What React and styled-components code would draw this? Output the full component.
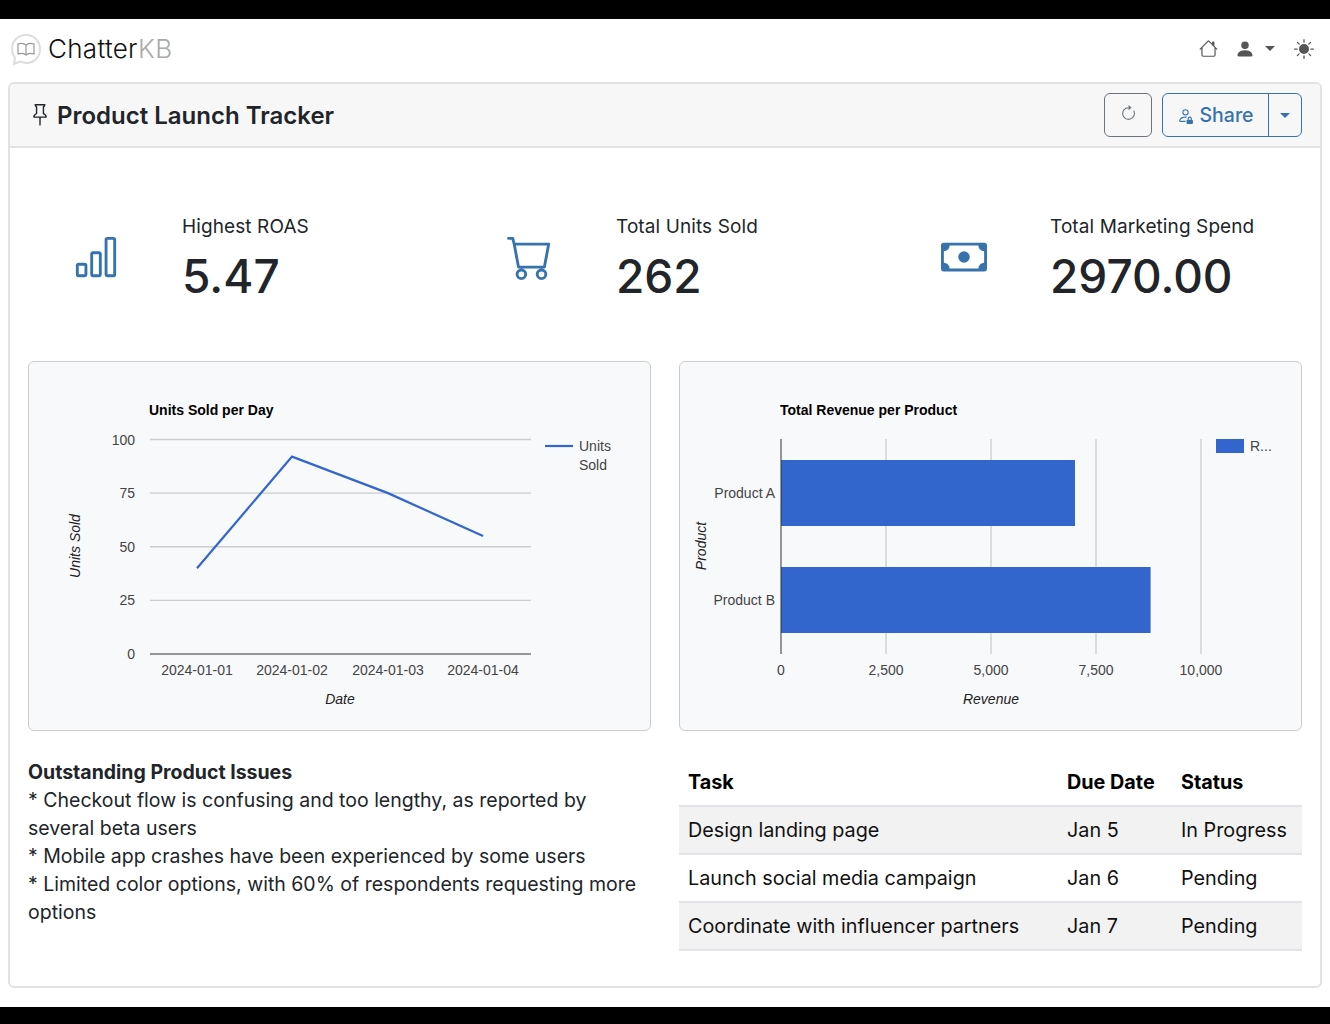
import React from 'react';
import styled, { createGlobalStyle } from 'styled-components';
import {
  BsHouse, BsPersonFill, BsSunFill, BsPin, BsArrowClockwise,
  BsPersonLock, BsBarChart, BsCart, BsCash,
} from 'react-icons/bs';

const GlobalStyle = createGlobalStyle`
  html, body { margin: 0; padding: 0; background: #000; }
  body { font-family: Inter, "Noto Sans", sans-serif; color: #212529; }
`;

const Page = styled.div`
  width: 1330px;
  height: 1024px;
  padding: 19px 0 17px;
  box-sizing: border-box;
`;

const Screen = styled.div`
  background: #fff;
  height: 988px;
  padding: 0 8px;
  box-sizing: border-box;
`;

const Nav = styled.nav`
  height: 63px;
  display: flex;
  align-items: center;
  justify-content: space-between;
  padding: 0 8px 4px 0;
  box-sizing: border-box;
`;

const Brand = styled.div`
  display: flex;
  align-items: center;
  gap: 6px;
  margin-left: 2px;
  font-size: 26px;
  letter-spacing: 0.3px;
  font-weight: 300;
  color: #111;
`;

const BrandLight = styled.span`
  color: #aaa;
`;

const LogoSvg = styled.svg`
  margin-top: 2px;
`;

const NavIcons = styled.div`
  display: flex;
  align-items: center;
  color: #555;
`;

const NavButton = styled.span`
  display: flex;
  align-items: center;
  margin-left: ${(p) => p.$gap || 0}px;
  font-size: ${(p) => p.$size || 20}px;
`;

const Caret = styled.span`
  width: 0;
  height: 0;
  margin-left: ${(p) => p.$gap || 0}px;
  border-left: 5px solid transparent;
  border-right: 5px solid transparent;
  border-top: 5px solid ${(p) => p.$color || '#555'};
`;

const Card = styled.main`
  height: 906px;
  border: 2px solid #e2e2e2;
  border-radius: 6px;
  box-sizing: border-box;
`;

const CardHeader = styled.header`
  height: 64px;
  background: #f7f7f7;
  border-bottom: 2px solid #e2e2e2;
  border-radius: 4px 4px 0 0;
  display: flex;
  align-items: center;
  justify-content: space-between;
  padding: 0 18px 0 19px;
  box-sizing: border-box;
`;

const Title = styled.h1`
  margin: 0;
  display: flex;
  align-items: center;
  gap: 6px;
  font-size: 24px;
  font-weight: 600;
  color: #212529;
`;

const HeaderActions = styled.div`
  display: flex;
  align-items: center;
  gap: 10px;
`;

const RefreshButton = styled.button`
  width: 48px;
  height: 44px;
  background: transparent;
  border: 1px solid #6c757d;
  border-radius: 6px;
  color: #6c757d;
  display: flex;
  align-items: center;
  justify-content: center;
  font-size: 17px;
  padding: 0 0 3px;
`;

const ShareGroup = styled.div`
  display: flex;
  height: 44px;
  border: 1px solid #3673ad;
  border-radius: 6px;
  box-sizing: border-box;
  color: #3673ad;
`;

const ShareMain = styled.div`
  width: 106px;
  display: flex;
  align-items: center;
  justify-content: center;
  gap: 5px;
  font-size: 19.5px;
  font-weight: 500;
  border-right: 1px solid #3673ad;
  box-sizing: border-box;
`;

const ShareCaret = styled.div`
  width: 32px;
  display: flex;
  align-items: center;
  justify-content: center;
`;

const CardBody = styled.section`
  padding: 0 18px;
`;

const Stats = styled.div`
  display: grid;
  grid-template-columns: repeat(3, 434px);
  height: 213px;
  align-items: start;
  padding-top: 65px;
  box-sizing: border-box;
`;

const Stat = styled.div`
  display: grid;
  grid-template-columns: 136px 1fr;
  column-gap: 18px;
`;

const StatIcon = styled.div`
  display: flex;
  align-items: center;
  justify-content: center;
  color: #3673ad;
  font-size: ${(p) => p.$size}px;
  height: 88px;
`;

const StatLabel = styled.div`
  font-size: 19px;
  line-height: 28px;
  letter-spacing: 0.1px;
  color: #212529;
`;

const StatValue = styled.div`
  font-size: 46px;
  line-height: 70px;
  font-weight: 500;
  color: #212529;
`;

const ChartsRow = styled.div`
  display: grid;
  grid-template-columns: 1fr 1fr;
  column-gap: 28px;
`;

const ChartBox = styled.div`
  height: 370px;
  background: #f8f9fa;
  border: 1px solid #ccc;
  border-radius: 6px;
  box-sizing: border-box;
`;

const ChartSvg = styled.svg`
  display: block;
  font-family: "Liberation Sans", Arial, sans-serif;
  font-size: 14px;
  fill: #444;
`;

const ChartTitle = styled.text`
  font-weight: 700;
  font-size: 14px;
  fill: #000;
`;

const AxisTitle = styled.text`
  font-style: italic;
  fill: #222;
`;

const BottomRow = styled.div`
  display: grid;
  grid-template-columns: 1fr 1fr;
  column-gap: 28px;
  margin-top: 27px;
`;

const Notes = styled.div`
  font-size: 19.5px;
  line-height: 28px;
  color: #212529;
`;

const NotesTitle = styled.div`
  font-weight: 700;
`;

const Table = styled.table`
  width: 100%;
  border-collapse: collapse;
  font-size: 19.8px;
  color: #111;
`;

const Th = styled.th`
  text-align: left;
  font-weight: 700;
  height: 48px;
  padding: 0 9px;
  color: #000;
  border-bottom: 2px solid #e2e3e8;
  width: ${(p) => p.$width || 'auto'};
  box-sizing: border-box;
`;

const Row = styled.tr`
  background: ${(p) => (p.$striped ? '#f2f2f2' : '#fff')};
`;

const Td = styled.td`
  height: 46px;
  padding: 0 9px;
  border-bottom: 2px solid #e2e3e8;
`;

const rows = [
  { task: 'Design landing page', due: 'Jan 5', status: 'In Progress' },
  { task: 'Launch social media campaign', due: 'Jan 6', status: 'Pending' },
  { task: 'Coordinate with influencer partners', due: 'Jan 7', status: 'Pending' },
];

const stats = [
  { label: 'Highest ROAS', value: '5.47', icon: <BsBarChart />, size: 46 },
  { label: 'Total Units Sold', value: '262', icon: <BsCart />, size: 46 },
  { label: 'Total Marketing Spend', value: '2970.00', icon: <BsCash />, size: 46 },
];

const unitsData = [
  { x: 168, v: 40, label: '2024-01-01' },
  { x: 263, v: 92, label: '2024-01-02' },
  { x: 359, v: 75, label: '2024-01-03' },
  { x: 454, v: 55, label: '2024-01-04' },
];

const valueToY = (v) => 292 - v * 2.145;

function UnitsChart() {
  return (
    <ChartSvg width="621" height="368" viewBox="0 0 621 368">
      <ChartTitle x="120" y="53">Units Sold per Day</ChartTitle>
      {[100, 75, 50, 25].map((v) => (
        <line key={v} x1="121" x2="502" y1={valueToY(v)} y2={valueToY(v)} stroke="#ccc" strokeWidth="1.3" />
      ))}
      <line x1="121" x2="502" y1="292" y2="292" stroke="#333" strokeWidth="1" />
      {[100, 75, 50, 25, 0].map((v) => (
        <text key={v} x="106" y={valueToY(v) + 5} textAnchor="end">{v}</text>
      ))}
      <polyline
        points={unitsData.map((d) => `${d.x},${valueToY(d.v)}`).join(' ')}
        fill="none"
        stroke="#3366cc"
        strokeWidth="2.2"
      />
      {unitsData.map((d) => (
        <text key={d.label} x={d.x} y="313" textAnchor="middle">{d.label}</text>
      ))}
      <AxisTitle x="311" y="342" textAnchor="middle">Date</AxisTitle>
      <AxisTitle transform="translate(51 184) rotate(-90)" textAnchor="middle">Units Sold</AxisTitle>
      <line x1="516" x2="544" y1="84" y2="84" stroke="#3366cc" strokeWidth="2.2" />
      <text x="550" y="89">Units</text>
      <text x="550" y="108">Sold</text>
    </ChartSvg>
  );
}

const revenueData = [
  { label: 'Product A', value: 7000, y: 98 },
  { label: 'Product B', value: 8800, y: 205 },
];

const revenueToX = (v) => 101 + v * 0.042;

function RevenueChart() {
  return (
    <ChartSvg width="621" height="368" viewBox="0 0 621 368">
      <ChartTitle x="100" y="53">Total Revenue per Product</ChartTitle>
      {[2500, 5000, 7500, 10000].map((v) => (
        <line key={v} x1={revenueToX(v)} x2={revenueToX(v)} y1="77" y2="292" stroke="#ccc" strokeWidth="1.3" />
      ))}
      {revenueData.map((d) => (
        <rect key={d.label} x="101" y={d.y} width={revenueToX(d.value) - 101} height="66" fill="#3366cc" />
      ))}
      <line x1="101" x2="101" y1="77" y2="292" stroke="#333" strokeWidth="1" />
      {revenueData.map((d) => (
        <text key={d.label} x="95" y={d.y + 38} textAnchor="end">{d.label}</text>
      ))}
      {[0, 2500, 5000, 7500, 10000].map((v) => (
        <text key={v} x={revenueToX(v)} y="313" textAnchor="middle">{v.toLocaleString('en-US')}</text>
      ))}
      <AxisTitle x="311" y="342" textAnchor="middle">Revenue</AxisTitle>
      <AxisTitle transform="translate(26 184) rotate(-90)" textAnchor="middle">Product</AxisTitle>
      <rect x="536" y="77" width="28" height="14" fill="#3366cc" />
      <text x="570" y="89">R...</text>
    </ChartSvg>
  );
}

function LogoMark() {
  return (
    <LogoSvg width="32" height="33" viewBox="0 0 32 33" fill="none">
      <path
        d="M16 2C8 2 2 8 2 16c0 3.500 1.200 6.500 3 9l-1 6 6.500-2.600C12 29.300 14 30 16 30c8 0 14-6 14-14S24 2 16 2Z"
        stroke="#ddd"
        strokeWidth="2"
      />
      <path
        d="M8 11c3-1 6-1 8 1 2-2 5-2 8-1v10c-3-1-6-1-8 1-2-2-5-2-8-1V11Zm8 1v10"
        stroke="#999"
        strokeWidth="1.200"
      />
    </LogoSvg>
  );
}

export default function App() {
  return (
    <Page>
      <GlobalStyle />
      <Screen>
        <Nav>
          <Brand>
            <LogoMark />
            <span>Chatter<BrandLight>KB</BrandLight></span>
          </Brand>
          <NavIcons>
            <NavButton $size={19}><BsHouse /></NavButton>
            <NavButton $gap={17} $size={20}><BsPersonFill /></NavButton>
            <Caret $gap={10} />
            <NavButton $gap={19} $size={20}><BsSunFill /></NavButton>
          </NavIcons>
        </Nav>
        <Card>
          <CardHeader>
            <Title><BsPin size={22} />Product Launch Tracker</Title>
            <HeaderActions>
              <RefreshButton><BsArrowClockwise /></RefreshButton>
              <ShareGroup>
                <ShareMain><BsPersonLock size={17} />Share</ShareMain>
                <ShareCaret><Caret $color="#3673ad" /></ShareCaret>
              </ShareGroup>
            </HeaderActions>
          </CardHeader>
          <CardBody>
            <Stats>
              {stats.map((s) => (
                <Stat key={s.label}>
                  <StatIcon $size={s.size}>{s.icon}</StatIcon>
                  <div>
                    <StatLabel>{s.label}</StatLabel>
                    <StatValue>{s.value}</StatValue>
                  </div>
                </Stat>
              ))}
            </Stats>
            <ChartsRow>
              <ChartBox><UnitsChart /></ChartBox>
              <ChartBox><RevenueChart /></ChartBox>
            </ChartsRow>
            <BottomRow>
              <Notes>
                <NotesTitle>Outstanding Product Issues</NotesTitle>
                * Checkout flow is confusing and too lengthy, as reported by several beta users<br />
                * Mobile app crashes have been experienced by some users<br />
                * Limited color options, with 60% of respondents requesting more options
              </Notes>
              <Table>
                <thead>
                  <tr>
                    <Th>Task</Th>
                    <Th $width="114px">Due Date</Th>
                    <Th $width="130px">Status</Th>
                  </tr>
                </thead>
                <tbody>
                  {rows.map((r, i) => (
                    <Row key={r.task} $striped={i % 2 === 0}>
                      <Td>{r.task}</Td>
                      <Td>{r.due}</Td>
                      <Td>{r.status}</Td>
                    </Row>
                  ))}
                </tbody>
              </Table>
            </BottomRow>
          </CardBody>
        </Card>
      </Screen>
    </Page>
  );
}
